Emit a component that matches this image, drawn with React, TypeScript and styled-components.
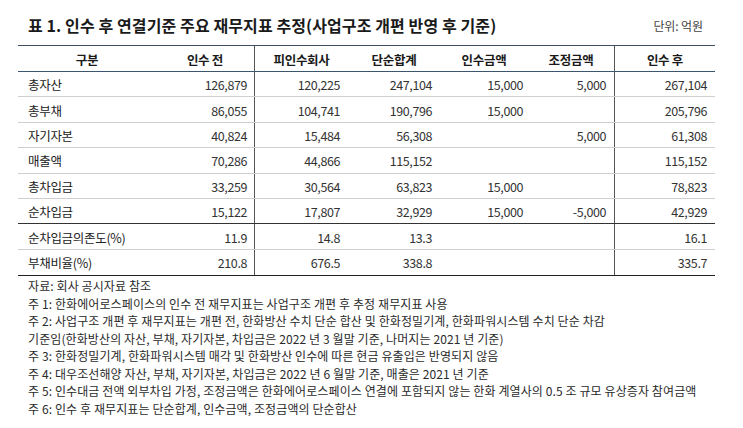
import React from "react";
import styled, { createGlobalStyle } from "styled-components";

const Global = createGlobalStyle`
  html, body { margin: 0; padding: 0; background: #ffffff; }
  body { font-family: "Noto Sans CJK KR", "Noto Sans", sans-serif; color: #222; }
`;

const COLS = "138px 99px 93px 92px 88px 87px 100px";

const Page = styled.div`
  width: 697px;
  padding: 14px 0 0 18px;
`;

const TitleBar = styled.div`
  display: flex;
  justify-content: space-between;
  align-items: center;
  height: 22px;
  padding: 0 12px 0 10px;
  margin-bottom: 9px;
`;

const Title = styled.h1`
  margin: 0;
  font-size: 16px;
  font-weight: 700;
  letter-spacing: 0.1px;
  color: #1a1a1a;
`;

const Unit = styled.span`
  font-size: 12px;
  color: #444;
  letter-spacing: -0.1px;
`;

const Table = styled.div`
  display: flex;
  flex-direction: column;
  border-top: 1px solid #3d4f61;
  border-bottom: 1px solid #222;
`;

const Row = styled.div<{ $head?: boolean; $line?: "light" | "dark" | "none" }>`
  display: grid;
  grid-template-columns: ${COLS};
  height: ${(p) => (p.$head ? "26px" : "25.4px")};
  box-sizing: border-box;
  border-bottom: 1px solid
    ${(p) => (p.$head ? "#3d5670" : p.$line === "dark" ? "#333" : "#cfcfcf")};
  ${(p) => (p.$line === "none" ? "border-bottom: none;" : "")}
`;

const Cell = styled.div<{ $divide?: boolean; $head?: boolean; $label?: boolean; $pad?: number }>`
  display: flex;
  align-items: center;
  justify-content: ${(p) => (p.$head ? "center" : p.$label ? "flex-start" : "flex-end")};
  padding: ${(p) => (p.$head ? "1px 0 0 0" : p.$label ? "1px 0 0 10px" : `1px ${p.$pad ?? 7}px 0 0`)};
  border-right: ${(p) => (p.$divide ? "1px solid #555" : "none")};
  font-size: 12.5px;
  font-weight: ${(p) => (p.$head ? 700 : 400)};
  color: ${(p) => (p.$head ? "#1a1a1a" : p.$label ? "#222" : "#333")};
  letter-spacing: ${(p) => (p.$label || p.$head ? "-0.3px" : "-0.4px")};
  white-space: nowrap;
`;

const Notes = styled.div`
  padding: 1px 0 0 10px;
  font-size: 12px;
  line-height: 17.5px;
  color: #2a2a2a;
  letter-spacing: 0.1px;
`;

const Note = styled.div`
  white-space: nowrap;
`;

const headers = ["구분", "인수 전", "피인수회사", "단순합계", "인수금액", "조정금액", "인수 후"];

type R = { label: string; v: string[]; line?: "light" | "dark" | "none" };

const rows: R[] = [
  { label: "총자산", v: ["126,879", "120,225", "247,104", "15,000", "5,000", "267,104"] },
  { label: "총부채", v: ["86,055", "104,741", "190,796", "15,000", "", "205,796"] },
  { label: "자기자본", v: ["40,824", "15,484", "56,308", "", "5,000", "61,308"] },
  { label: "매출액", v: ["70,286", "44,866", "115,152", "", "", "115,152"] },
  { label: "총차입금", v: ["33,259", "30,564", "63,823", "15,000", "", "78,823"] },
  { label: "순차입금", v: ["15,122", "17,807", "32,929", "15,000", "-5,000", "42,929"], line: "dark" },
  { label: "순차입금의존도(%)", v: ["11.9", "14.8", "13.3", "", "", "16.1"] },
  { label: "부채비율(%)", v: ["210.8", "676.5", "338.8", "", "", "335.7"], line: "none" },
];

const pads = [7, 8, 8, 5, 8, 8];

const notes = [
  "자료: 회사 공시자료 참조",
  "주 1: 한화에어로스페이스의 인수 전 재무지표는 사업구조 개편 후 추정 재무지표 사용",
  "주 2: 사업구조 개편 후 재무지표는 개편 전, 한화방산 수치 단순 합산 및 한화정밀기계, 한화파워시스템 수치 단순 차감",
  "기준임(한화방산의 자산, 부채, 자기자본, 차입금은 2022 년 3 월말 기준, 나머지는 2021 년 기준)",
  "주 3: 한화정밀기계, 한화파워시스템 매각 및 한화방산 인수에 따른 현금 유출입은 반영되지 않음",
  "주 4: 대우조선해양 자산, 부채, 자기자본, 차입금은 2022 년 6 월말 기준, 매출은 2021 년 기준",
  "주 5: 인수대금 전액 외부차입 가정, 조정금액은 한화에어로스페이스 연결에 포함되지 않는 한화 계열사의 0.5 조 규모 유상증자 참여금액",
  "주 6: 인수 후 재무지표는 단순합계, 인수금액, 조정금액의 단순합산",
];

export default function App() {
  return (
    <>
      <Global />
      <Page>
        <TitleBar>
          <Title>표 1. 인수 후 연결기준 주요 재무지표 추정(사업구조 개편 반영 후 기준)</Title>
          <Unit>단위: 억원</Unit>
        </TitleBar>
        <Table>
          <Row $head>
            {headers.map((h, i) => (
              <Cell key={h} $head $divide={i === 1 || i === 5}>
                {h}
              </Cell>
            ))}
          </Row>
          {rows.map((r) => (
            <Row key={r.label} $line={r.line}>
              <Cell $label>{r.label}</Cell>
              {r.v.map((v, i) => (
                <Cell key={i} $pad={pads[i]} $divide={i === 0 || i === 4}>
                  {v}
                </Cell>
              ))}
            </Row>
          ))}
        </Table>
        <Notes>
          {notes.map((n) => (
            <Note key={n}>{n}</Note>
          ))}
        </Notes>
      </Page>
    </>
  );
}
